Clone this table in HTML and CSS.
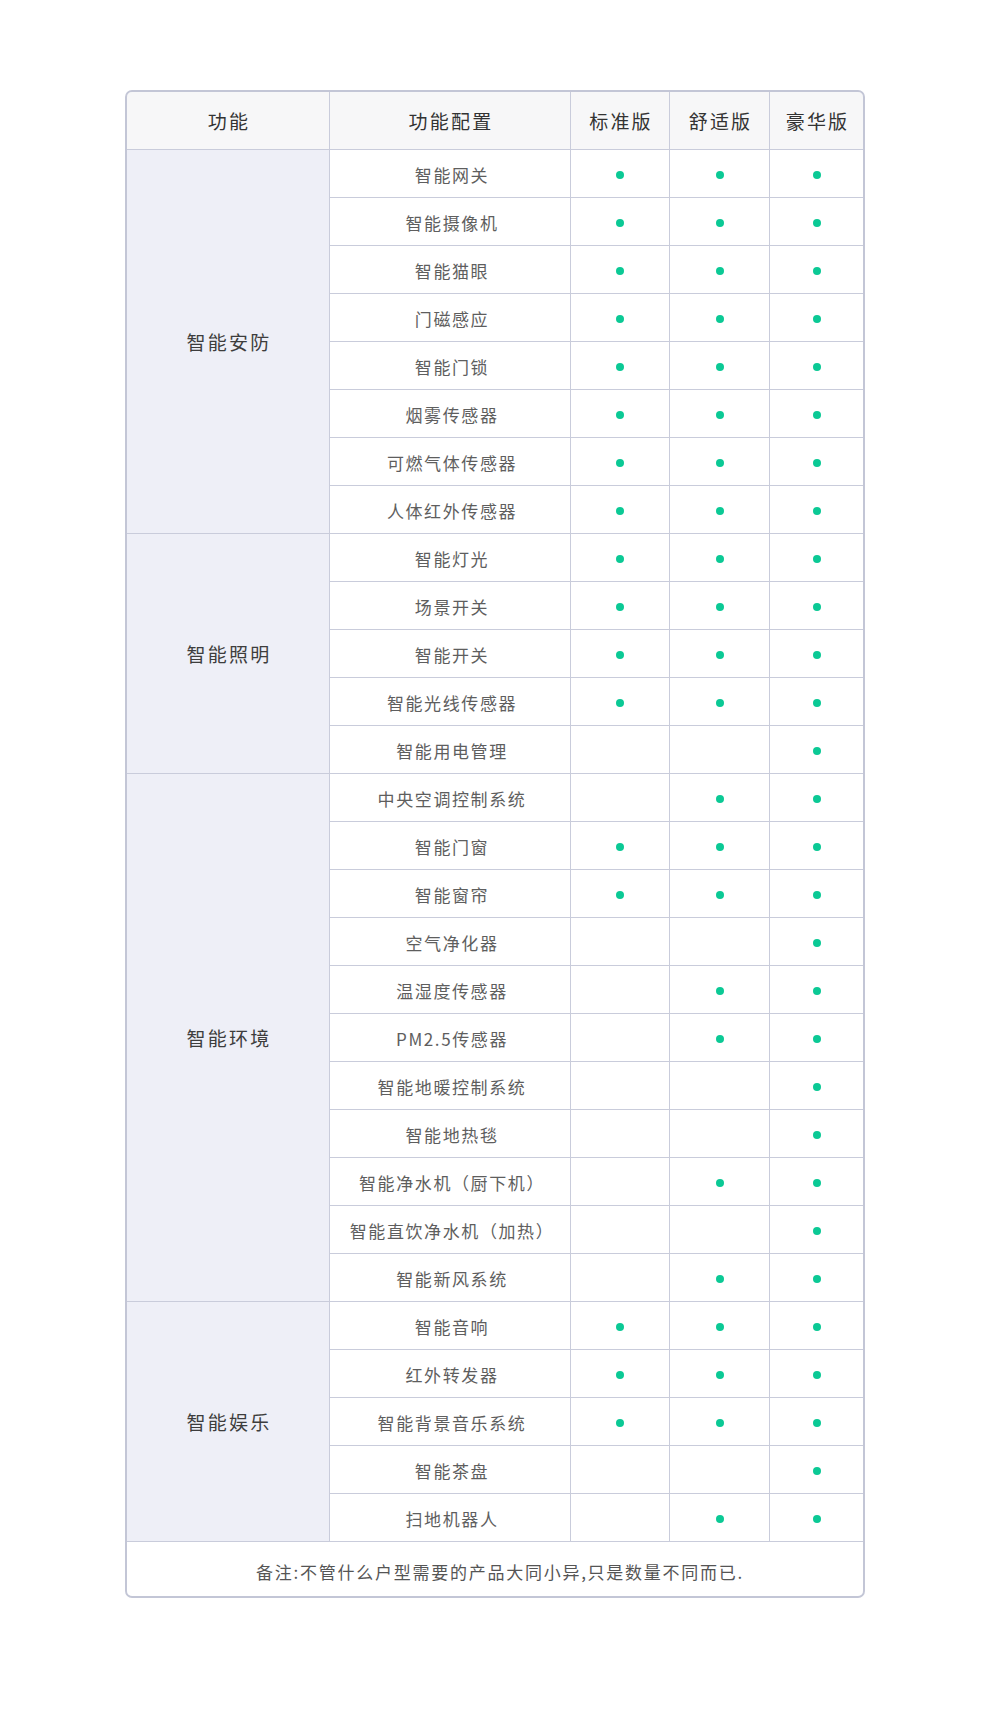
FILE: index.html
```html
<!DOCTYPE html>
<html lang="zh-CN">
<head>
<meta charset="utf-8">
<title>智能家居配置表</title>
<link rel="stylesheet" href="styles.css">
</head>
<body>
<div class="sheet">
  <div class="grid">
    <div class="cell head">功能</div>
    <div class="cell head">功能配置</div>
    <div class="cell head">标准版</div>
    <div class="cell head">舒适版</div>
    <div class="cell head">豪华版</div>

    <div class="cell group g8">智能安防</div>
    <div class="cell item">智能网关</div><div class="cell"><i class="dot"></i></div><div class="cell"><i class="dot"></i></div><div class="cell"><i class="dot"></i></div>
    <div class="cell item">智能摄像机</div><div class="cell"><i class="dot"></i></div><div class="cell"><i class="dot"></i></div><div class="cell"><i class="dot"></i></div>
    <div class="cell item">智能猫眼</div><div class="cell"><i class="dot"></i></div><div class="cell"><i class="dot"></i></div><div class="cell"><i class="dot"></i></div>
    <div class="cell item">门磁感应</div><div class="cell"><i class="dot"></i></div><div class="cell"><i class="dot"></i></div><div class="cell"><i class="dot"></i></div>
    <div class="cell item">智能门锁</div><div class="cell"><i class="dot"></i></div><div class="cell"><i class="dot"></i></div><div class="cell"><i class="dot"></i></div>
    <div class="cell item">烟雾传感器</div><div class="cell"><i class="dot"></i></div><div class="cell"><i class="dot"></i></div><div class="cell"><i class="dot"></i></div>
    <div class="cell item">可燃气体传感器</div><div class="cell"><i class="dot"></i></div><div class="cell"><i class="dot"></i></div><div class="cell"><i class="dot"></i></div>
    <div class="cell item">人体红外传感器</div><div class="cell"><i class="dot"></i></div><div class="cell"><i class="dot"></i></div><div class="cell"><i class="dot"></i></div>

    <div class="cell group g5">智能照明</div>
    <div class="cell item">智能灯光</div><div class="cell"><i class="dot"></i></div><div class="cell"><i class="dot"></i></div><div class="cell"><i class="dot"></i></div>
    <div class="cell item">场景开关</div><div class="cell"><i class="dot"></i></div><div class="cell"><i class="dot"></i></div><div class="cell"><i class="dot"></i></div>
    <div class="cell item">智能开关</div><div class="cell"><i class="dot"></i></div><div class="cell"><i class="dot"></i></div><div class="cell"><i class="dot"></i></div>
    <div class="cell item">智能光线传感器</div><div class="cell"><i class="dot"></i></div><div class="cell"><i class="dot"></i></div><div class="cell"><i class="dot"></i></div>
    <div class="cell item">智能用电管理</div><div class="cell"></div><div class="cell"></div><div class="cell"><i class="dot"></i></div>

    <div class="cell group g11">智能环境</div>
    <div class="cell item">中央空调控制系统</div><div class="cell"></div><div class="cell"><i class="dot"></i></div><div class="cell"><i class="dot"></i></div>
    <div class="cell item">智能门窗</div><div class="cell"><i class="dot"></i></div><div class="cell"><i class="dot"></i></div><div class="cell"><i class="dot"></i></div>
    <div class="cell item">智能窗帘</div><div class="cell"><i class="dot"></i></div><div class="cell"><i class="dot"></i></div><div class="cell"><i class="dot"></i></div>
    <div class="cell item">空气净化器</div><div class="cell"></div><div class="cell"></div><div class="cell"><i class="dot"></i></div>
    <div class="cell item">温湿度传感器</div><div class="cell"></div><div class="cell"><i class="dot"></i></div><div class="cell"><i class="dot"></i></div>
    <div class="cell item">PM2.5传感器</div><div class="cell"></div><div class="cell"><i class="dot"></i></div><div class="cell"><i class="dot"></i></div>
    <div class="cell item">智能地暖控制系统</div><div class="cell"></div><div class="cell"></div><div class="cell"><i class="dot"></i></div>
    <div class="cell item">智能地热毯</div><div class="cell"></div><div class="cell"></div><div class="cell"><i class="dot"></i></div>
    <div class="cell item">智能净水机（厨下机）</div><div class="cell"></div><div class="cell"><i class="dot"></i></div><div class="cell"><i class="dot"></i></div>
    <div class="cell item">智能直饮净水机（加热）</div><div class="cell"></div><div class="cell"></div><div class="cell"><i class="dot"></i></div>
    <div class="cell item">智能新风系统</div><div class="cell"></div><div class="cell"><i class="dot"></i></div><div class="cell"><i class="dot"></i></div>

    <div class="cell group g5">智能娱乐</div>
    <div class="cell item">智能音响</div><div class="cell"><i class="dot"></i></div><div class="cell"><i class="dot"></i></div><div class="cell"><i class="dot"></i></div>
    <div class="cell item">红外转发器</div><div class="cell"><i class="dot"></i></div><div class="cell"><i class="dot"></i></div><div class="cell"><i class="dot"></i></div>
    <div class="cell item">智能背景音乐系统</div><div class="cell"><i class="dot"></i></div><div class="cell"><i class="dot"></i></div><div class="cell"><i class="dot"></i></div>
    <div class="cell item">智能茶盘</div><div class="cell"></div><div class="cell"></div><div class="cell"><i class="dot"></i></div>
    <div class="cell item">扫地机器人</div><div class="cell"></div><div class="cell"><i class="dot"></i></div><div class="cell"><i class="dot"></i></div>

    <div class="cell note">备注:不管什么户型需要的产品大同小异,只是数量不同而已.</div>
  </div>
</div>
</body>
</html>
```

FILE: styles.css
```css
html, body {
  margin: 0;
  padding: 0;
  background: #ffffff;
}

body {
  font-family: "Noto Sans CJK SC", "Noto Sans", sans-serif;
  color: #666666;
}

.sheet {
  width: 736px;
  margin: 90px 0 0 125px;
  border: 2px solid #c3c6d6;
  border-radius: 7px;
  overflow: hidden;
  background: #c9ccdb;
}

.grid {
  display: grid;
  grid-template-columns: 202px 240px 98px 99px 93px;
  grid-template-rows: 57px repeat(29, 47px) 54px;
  gap: 1px;
  background: #c9ccdb;
}

.cell {
  display: flex;
  align-items: center;
  justify-content: center;
  background: #ffffff;
  padding-top: 2px;
  box-sizing: border-box;
}

.head {
  background: #f7f7f8;
  font-size: 19px;
  letter-spacing: 2.2px;
  color: #333333;
  padding-left: 2px;
  padding-top: 0;
}

.group {
  grid-column: 1;
  background: #eeeff7;
  font-size: 19px;
  letter-spacing: 2.2px;
  color: #3d3d3d;
  padding-left: 2px;
  padding-top: 0;
}

.g8 { grid-row: span 8; }
.g5 { grid-row: span 5; }
.g11 { grid-row: span 11; }

.item {
  font-size: 17px;
  letter-spacing: 1.6px;
  color: #5e5e5e;
  padding-left: 4px;
}

.dot {
  display: block;
  width: 8px;
  height: 8px;
  border-radius: 50%;
  background: #0bc995;
}

.note {
  grid-column: 1 / -1;
  font-size: 17px;
  letter-spacing: 1.75px;
  color: #555555;
  padding-left: 10px;
  padding-top: 4px;
}
```
